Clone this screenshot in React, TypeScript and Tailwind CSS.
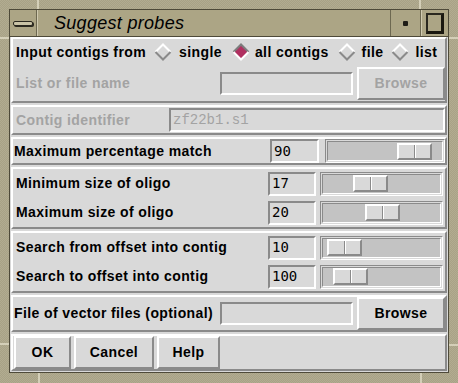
import React from "react";

const raised =
  "border-2 border-t-white border-l-white border-r-[#8a8a8a] border-b-[#8a8a8a]";
const sunken =
  "border-2 border-t-[#8a8a8a] border-l-[#8a8a8a] border-r-white border-b-white";

const label =
  "font-['Liberation_Sans',Arial,sans-serif] font-bold text-[14px] tracking-[0.4px] text-black whitespace-nowrap";

function Diamond({ on = false }: { on?: boolean }) {
  return (
    <svg width="18" height="18" viewBox="0 0 18 18" className="shrink-0 block">
      <polygon points="9,1 17,9 9,17 1,9" fill={on ? "#b03060" : "#d9d9d9"} />
      <polyline
        points="1.5,9 9,1.5 16.5,9"
        fill="none"
        stroke={on ? "#7c7c7c" : "#ffffff"}
        strokeWidth="2"
      />
      <polyline
        points="1.5,9 9,16.5 16.5,9"
        fill="none"
        stroke={on ? "#ffffff" : "#8a8a8a"}
        strokeWidth="2"
      />
    </svg>
  );
}

function Entry({ value = "", className = "", mono = "dejavu" }: { value?: string; className?: string; mono?: string }) {
  const font =
    mono === "liberation"
      ? "font-['Liberation_Mono',monospace] text-[#a3a3a3]"
      : "font-['DejaVu_Sans_Mono',monospace] text-black";
  return (
    <div className={`${sunken} shrink-0 bg-[#d9d9d9] flex items-center pl-[2px] text-[14px] ${font} ${className}`}>
      {value}
    </div>
  );
}

function Slider({ offset, className = "" }: { offset: number; className?: string }) {
  return (
    <div className={`shrink-0 border border-t-[#8a8a8a] border-l-[#8a8a8a] border-r-white border-b-white p-px bg-[#d9d9d9] ${className}`}>
      <div className="h-full border border-t-[#8a8a8a] border-l-[#8a8a8a] border-r-white border-b-white bg-[#c3c3c3] flex items-center">
        <div
          className={`${raised} h-[17px] w-[35px] bg-[#d9d9d9] flex justify-center`}
          style={{ marginLeft: offset }}
        >
          <div className="w-[1px] h-full bg-[#8a8a8a]" />
          <div className="w-[1px] h-full bg-white" />
        </div>
      </div>
    </div>
  );
}

function Btn({ text, className = "", disabled = false }: { text: string; className?: string; disabled?: boolean }) {
  return (
    <div
      className={`${raised} shrink-0 bg-[#d9d9d9] flex items-center justify-center font-['Liberation_Sans',Arial,sans-serif] font-bold text-[14px] tracking-[0.4px] ${
        disabled ? "text-[#a3a3a3]" : "text-black"
      } ${className}`}
    >
      {text}
    </div>
  );
}

const sliderRows = [
  { group: 1, text: "Minimum size of oligo", value: "17", offset: 30 },
  { group: 1, text: "Maximum size of oligo", value: "20", offset: 42 },
  { group: 2, text: "Search from offset into contig", value: "10", offset: 4 },
  { group: 2, text: "Search to offset into contig", value: "100", offset: 10 },
];

export default function App() {
  return (
    <div className="relative w-[458px] h-[383px] pt-[9px] pl-[9px] pr-[9px] pb-[10px] bg-[#a9a388] bg-[repeating-conic-gradient(#a8a286_0_25%,#b2ac91_0_50%)] bg-[length:2px_2px]">
      {/* frame notches */}
      <div className="absolute left-[37px] top-0 w-[2px] h-[9px] bg-[#d4cfb8]" />
      <div className="absolute left-[419px] top-0 w-[2px] h-[9px] bg-[#d4cfb8]" />
      <div className="absolute left-[38px] bottom-0 w-[2px] h-[10px] bg-[#d4cfb8]" />
      <div className="absolute left-[420px] bottom-0 w-[2px] h-[10px] bg-[#d4cfb8]" />
      <div className="absolute left-0 top-[37px] w-[9px] h-[2px] bg-[#d4cfb8]" />
      <div className="absolute right-0 top-[37px] w-[9px] h-[2px] bg-[#d4cfb8]" />
      <div className="absolute left-0 top-[343px] w-[9px] h-[2px] bg-[#d4cfb8]" />
      <div className="absolute right-0 top-[344px] w-[9px] h-[2px] bg-[#d4cfb8]" />

      <div className="w-full h-full border border-[#4e4a39] flex flex-col">
        {/* title bar */}
        <div className="h-[27px] flex bg-[#aca585] border-b border-[#4e4a39]">
          <div className="w-[27px] flex items-center justify-center border-r border-r-[#6d6850]">
            <div className="w-[20px] h-[5px] rounded-[2px] border border-[#2a281f] bg-[#c9c3a6] shadow-[1px_1px_0_#2a281f]" />
          </div>
          <div className="flex-1 flex items-center pl-[16px] border-l border-l-[#d0cab0] font-['Liberation_Sans',Arial,sans-serif] italic text-[18px] tracking-[0.3px] text-black">
            Suggest probes
          </div>
          <div className="w-[31px] flex items-center justify-center border-l border-l-[#6d6850] border-r border-r-[#6d6850]">
            <div className="w-[5px] h-[5px] bg-[#1e1c16] rounded-[1px]" />
          </div>
          <div className="w-[27px] flex items-center justify-center border-l border-l-[#d0cab0]">
            <div className="w-[18px] h-[21px] border-2 border-t-[#2a281f] border-l-[#2a281f] border-r-[#1a1810] border-b-[#1a1810] border-r-[3px] border-b-[3px] bg-[#aca585]" />
          </div>
        </div>

        {/* content */}
        <div className="flex-1 bg-[#d9d9d9] flex flex-col gap-[2px] px-px pb-px">
          {/* input contigs */}
          <div className={`${raised} h-[66px] flex flex-col`}>
            <div className="h-[26px] flex items-center pl-[3px] whitespace-nowrap">
              <span className={label}>Input contigs from</span>
              <span className="ml-[8px]"><Diamond /></span>
              <span className={`${label} ml-[7px]`}>single</span>
              <span className="ml-[10px]"><Diamond on /></span>
              <span className={`${label} ml-[5px]`}>all contigs</span>
              <span className="ml-[9px]"><Diamond /></span>
              <span className={`${label} ml-[6px]`}>file</span>
              <span className="ml-[8px]"><Diamond /></span>
              <span className={`${label} ml-[6px]`}>list</span>
            </div>
            <div className="flex-1 flex items-center pl-[3px]">
              <span className={`${label} !text-[#a3a3a3] flex-1`}>List or file name</span>
              <Entry className="w-[133px] h-[23px]" />
              <Btn text="Browse" disabled className="ml-[4px] w-[88px] h-[33px]" />
            </div>
          </div>

          {/* contig identifier */}
          <div className={`${raised} h-[30px] flex items-center pl-[3px]`}>
            <span className={`${label} !text-[#a3a3a3] w-[153px] shrink-0`}>Contig identifier</span>
            <Entry value="zf22b1.s1" mono="liberation" className="flex-1 h-[24px]" />
          </div>

          {/* max percentage */}
          <div className={`${raised} h-[28px] flex items-center pl-px`}>
            <span className={`${label} flex-1`}>Maximum percentage match</span>
            <Entry value="90" className="w-[49px] h-[24px]" />
            <Slider offset={69} className="ml-[6px] w-[120px] h-[24px]" />
          </div>

          {[1, 2].map((g) => (
            <div key={g} className={`${raised} h-[62px] flex flex-col pr-[2px]`}>
              {sliderRows
                .filter((r) => r.group === g)
                .map((r) => (
                  <div key={r.text} className="h-[29px] flex items-center pl-[3px]">
                    <span className={`${label} flex-1`}>{r.text}</span>
                    <Entry value={r.value} className="w-[48px] h-[24px]" />
                    <Slider offset={r.offset} className="ml-[4px] w-[123px] h-[24px]" />
                  </div>
                ))}
            </div>
          ))}

          {/* vector files */}
          <div className={`${raised} h-[37px] flex items-center pl-px`}>
            <span className={`${label} flex-1`}>File of vector files (optional)</span>
            <Entry className="w-[133px] h-[23px]" />
            <Btn text="Browse" className="ml-[4px] w-[88px] h-[33px]" />
          </div>

          {/* buttons */}
          <div className={`${raised} h-[37px] flex items-center gap-[3px] pl-px`}>
            <Btn text="OK" className="w-[57px] h-[33px]" />
            <Btn text="Cancel" className="w-[80px] h-[33px]" />
            <Btn text="Help" className="w-[63px] h-[33px]" />
          </div>
        </div>
      </div>
    </div>
  );
}
